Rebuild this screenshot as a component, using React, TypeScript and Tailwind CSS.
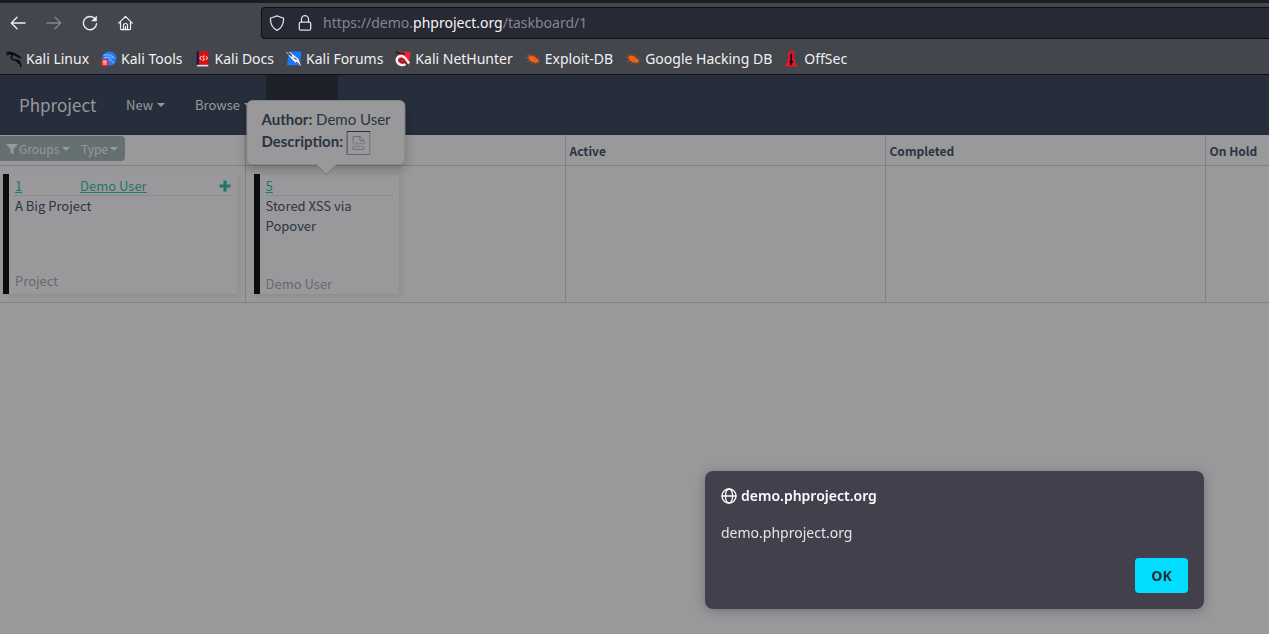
import React from "react";

type IconProps = { className?: string };

const stroke = {
  fill: "none",
  stroke: "currentColor",
  strokeWidth: 1.3,
  strokeLinecap: "round" as const,
  strokeLinejoin: "round" as const,
};

const BackIcon = ({ className = "" }: IconProps) => (
  <svg viewBox="0 0 16 16" className={`size-4 ${className}`} {...stroke} aria-hidden="true">
    <path d="M15 8H1.5M7 2.2 1.3 8 7 13.8" />
  </svg>
);

const ForwardIcon = () => (
  <svg viewBox="0 0 16 16" className="size-4" {...stroke} aria-hidden="true">
    <path d="M1 8h13.5M9 2.2 14.7 8 9 13.8" />
  </svg>
);

const ReloadIcon = () => (
  <svg viewBox="0 0 16 16" className="size-4" {...stroke} aria-hidden="true">
    <path d="M13.2 4A6.6 6.6 0 1 0 14.6 8.6" />
    <path d="M14.6 1.3v4.8H9.8z" fill="currentColor" strokeWidth="0.5" />
  </svg>
);

const HomeIcon = () => (
  <svg viewBox="0 0 16 16" className="size-4" {...stroke} strokeWidth={1.2} aria-hidden="true">
    <path d="M.8 8.2 7.500 1.400l6.700 6.800M2.500 7v6.800c0 .5.3.8.8.8h8.400c.5 0 .8-.3.8-.8V7" />
    <path d="M5.500 14.400V10.500c0-1.300.8-2 2-2s2 .7 2 2v3.900M7.500 11.500v2.900" />
  </svg>
);

const ShieldIcon = () => (
  <svg viewBox="0 0 16 16" className="size-4" {...stroke} aria-hidden="true">
    <path d="M8 .8 13.9 3c.4.1.7.5.7.9C14.5 9 12.5 13 8 15.3 3.5 13 1.5 9 1.4 3.9c0-.4.3-.8.7-.9z" />
  </svg>
);

const LockIcon = () => (
  <svg viewBox="0 0 16 16" className="size-4" {...stroke} aria-hidden="true">
    <rect x="2.3" y="7.2" width="11.4" height="8" rx="1.5" />
    <path d="M4.5 7V4.200a3.500 3.500 0 0 1 7 0V7" />
  </svg>
);

const GlobeIcon = () => (
  <svg viewBox="0 0 16 16" className="size-4" {...stroke} aria-hidden="true">
    <circle cx="8" cy="8" r="7" />
    <ellipse cx="8" cy="8" rx="3.6" ry="7" />
    <path d="M1 8h14" />
  </svg>
);

const DragonIcon = () => (
  <svg viewBox="0 0 16 16" className="size-4" fill="none" stroke="#0b0b0d" strokeLinecap="round" aria-hidden="true">
    <path d="M.5 1.200C4 .8 8 1.500 11.200 4M.4 3.800C3.500 2.600 6.500 2.700 9.500 4" strokeWidth="1" />
    <path d="M2 2.500c3-.6 6.500 0 9 2.500M6.300 4.300C4.300 7 6 9 9 9c4 .1 5.700 2.200 5.800 6.200" strokeWidth="1.6" />
    <path d="M10.500 4.200c2 .1 3.500 1 4.300 2.600l-3.300-.8M9.500 9.500c2.200.6 3 1.800 3 3" strokeWidth="1.1" />
  </svg>
);

const ToolsIcon = () => (
  <svg viewBox="0 0 16 16" className="size-4" aria-hidden="true">
    <circle cx="8.300" cy="7.600" r="7.200" fill="#2878f5" />
    <path d="M2.500 4.500C6 3 9.500 3.600 11.800 6.200M3 7c3-1.300 5.500-1 7.500.2M8 7.500c-.5 2.400 4 1.300 4.700 4.800M11 5.500l2.700 1.700" fill="none" stroke="#a9cbff" strokeWidth="0.9" />
    <circle cx="3.800" cy="11.800" r="3.800" fill="#ed2630" />
    <path d="M1.900 10.200h3.900M3 10.200v3.700M4.800 10.200v3.700" stroke="#fff" strokeWidth="0.9" />
  </svg>
);

const DocsIcon = () => (
  <svg viewBox="0 0 16 16" className="size-4" aria-hidden="true">
    <path d="M1.500.3h2.700v13.500H1.500z" fill="#181c49" />
    <path d="M4 .3h9.300v13.500H4z" fill="#dc1013" />
    <path d="M2 13.800h11.300v1.700H2z" fill="#ddd5d8" />
    <path d="M6.400 5 4.700 7l1.700 2M10.900 5l1.700 2-1.700 2M9.500 5H8.300l-.5 1.500 1.500 1-.4 1.700H7.600" fill="none" stroke="#fff" strokeWidth="0.9" />
  </svg>
);

const ForumsIcon = () => (
  <svg viewBox="0 0 16 16" className="size-4" aria-hidden="true">
    <path d="M3.200.5h12.300L14 14.300H.8z" fill="#1876f8" />
    <path d="m0 .8 4.500.8 7.700 6.100L15.200 15 8.600 11 5.700 7.900z" fill="#f5f5f5" />
    <path d="M1 .8 6 4.200M2 2.600l4.300 3M7.700 6.700l3 1.800M10 11l3.500 2.500" fill="none" stroke="#17191e" strokeWidth="0.9" />
  </svg>
);

const NetHunterIcon = () => (
  <svg viewBox="0 0 16 16" className="size-4" aria-hidden="true">
    <path d="M4.500.8h11.100L14.300 13.800H3z" fill="#ef2334" />
    <path d="M.5.9 5 2.300l5 .4" fill="none" stroke="#111" strokeWidth="1.6" strokeDasharray="1.5 .5" />
    <path d="M10.500 13.200C7.500 14.800 3.500 13.800 2.200 10.900 1 8 2.600 5.200 5.700 5c2-.1 3.600.8 4.700 2.300l3.700 5.200" fill="none" stroke="#f4f4f4" strokeWidth="2.4" />
    <path d="M9.300 11.500C7 12.600 4.800 11.500 4.800 9.500c.3-2 2.600-2.300 4-.6l3.600 5" fill="none" stroke="#15151a" strokeWidth="0.8" />
  </svg>
);

const BugIcon = () => (
  <svg viewBox="0 0 16 16" className="size-4" aria-hidden="true">
    <path d="m2 3.700 5 2.200M5.500 2.800l2.600 3M1 6.300l5 .8M2 10.400l4.500-1M6.500 12.500l2.500-2M10.200 13.300l.3-2.500M9.700 3.700l.7 2.500M13.900 6.300l-2.400 1.300M14 12.100l-2-1.300M12.500 9l2.500.7" stroke="#ad5527" strokeWidth="0.9" />
    <path d="M3.400 5.700C5.600 4 8.700 4.800 11 7c2.200 1.200 2.900 2.700 2.300 3.900-1.200 1.200-3.400 1.200-5.400.2-2.900-.9-4.700-2.900-4.500-5.400z" fill="#f5600f" />
  </svg>
);

const OffSecIcon = () => (
  <svg viewBox="0 0 16 16" className="size-4" aria-hidden="true">
    <path d="M4 .3h6.300v8.200l3.300 7.200H.8L4 8.500z" fill="#e41824" />
    <path d="M7.100 2 8.300 4l-.4 4.500 1.300 2.500-1.300 1.600.4 1.700H6l.4-1.700L5.100 11l1.300-2.500L6 4z" fill="#260b10" />
  </svg>
);

const FilterIcon = () => (
  <svg viewBox="0 0 12 12" className="size-3" fill="currentColor" aria-hidden="true">
    <path d="M.8 1h10.400c.5 0 .6.500.3.800L7.600 6v5.500L4.400 9.400V6L.5 1.800C.2 1.500.3 1 .8 1z" />
  </svg>
);

const PlusIcon = () => (
  <svg viewBox="0 0 12 12" className="size-3" fill="currentColor" aria-hidden="true">
    <path d="M4.500.5h3v4h4v3h-4v4h-3v-4h-4v-3h4z" />
  </svg>
);

const Caret = () => (
  <span className="inline-block border-x-4 border-t-4 border-x-transparent border-t-current" aria-hidden="true" />
);

const BrokenImage = () => (
  <svg viewBox="0 0 24 24" className="inline-block size-6 align-middle" fill="none" role="img" aria-label="Missing image">
    <path d="M.5 24V.5H24" stroke="#2e2f32" />
    <path d="M23.500 1v22.500H1" stroke="#66676a" />
    <path d="M6.500 11.500v-6h7l4 4v3M13.500 5.500v4h4" stroke="#6f7073" />
    <path d="m6.500 11.500 2 2 2-2 2 2 2-2 2 2 1-1M6.500 18.500v-3l2 1 2-2 2 2 2-2 2 2 1-.5v2.500z" stroke="#6f7073" strokeWidth="0.9" />
  </svg>
);

const bookmarks = [
  { label: "Kali Linux", Icon: DragonIcon },
  { label: "Kali Tools", Icon: ToolsIcon },
  { label: "Kali Docs", Icon: DocsIcon },
  { label: "Kali Forums", Icon: ForumsIcon },
  { label: "Kali NetHunter", Icon: NetHunterIcon },
  { label: "Exploit-DB", Icon: BugIcon },
  { label: "Google Hacking DB", Icon: BugIcon },
  { label: "OffSec", Icon: OffSecIcon },
];

function BrowserChrome() {
  return (
    <header className="border-b border-[#101116] bg-[#43464c] font-['Noto_Sans',sans-serif] text-[14px] text-[#f1f1f3]">
      <div className="flex h-[3px] bg-[#1b1c20]" />
      <div className="flex h-10 items-center pl-[10px]">
        <nav className="flex w-[251px] shrink-0 items-center gap-5" aria-label="Navigation">
          <button aria-label="Back"><BackIcon /></button>
          <button aria-label="Forward" className="text-[#85868b]" disabled><ForwardIcon /></button>
          <button aria-label="Reload"><ReloadIcon /></button>
          <button aria-label="Home"><HomeIcon /></button>
        </nav>
        <div className="flex h-8 grow items-center gap-3 rounded-l border border-r-0 border-[#0e0f13] bg-[#272935] pl-[7px] text-[#dedee2]">
          <ShieldIcon />
          <LockIcon />
          <a href="#board" className="-ml-0.5 leading-5 text-[#85868d]">
            https://demo.<span className="text-[#f5f5f7]">phproject.org</span>/taskboard/1
          </a>
        </div>
      </div>
      <nav className="flex h-[31px] items-center gap-3 pl-[6px]" aria-label="Bookmarks">
        {bookmarks.map(({ label, Icon }) => (
          <a key={label} href="#board" className="flex items-center gap-1 whitespace-nowrap">
            <Icon />
            {label}
          </a>
        ))}
      </nav>
    </header>
  );
}

function Navbar() {
  return (
    <nav className="flex h-[60px] items-center bg-[#272e3b] pl-[19px] text-[13px] text-[#98999c]">
      <a href="#board" className="w-[107px] text-[17px]">Phproject</a>
      <button className="flex w-[69px] items-center gap-1">New <Caret /></button>
      <button className="flex w-[71px] items-center gap-1">Browse <Caret /></button>
      <div className="h-full w-[72px] bg-[#1d2129]" />
    </nav>
  );
}

function Popover() {
  return (
    <div
      role="tooltip"
      className="absolute bottom-full left-1/2 mb-[9px] h-[65px] -translate-x-1/2 whitespace-nowrap rounded-md border border-[#868789] bg-[#99999b] px-[14px] py-[7px] font-[Lato,sans-serif] text-[15px] leading-[22px] text-[#2b3442] shadow-[0_5px_10px_rgba(0,0,0,0.22)]"
    >
      <p><strong>Author:</strong> Demo User</p>
      <p><strong>Description:</strong> <BrokenImage /></p>
      <svg viewBox="0 0 22 11" className="absolute left-1/2 top-full h-[11px] w-[22px] -translate-x-1/2" aria-hidden="true">
        <path d="M0 0h22L11 10.500z" fill="#99999b" />
        <path d="M.5 0 11 10.500 21.500 0" fill="none" stroke="#78797b" />
      </svg>
    </div>
  );
}

const cardClass =
  "flex h-[120px] flex-col border-l-6 border-[#0b0c0e] px-[6px] shadow-[2px_2px_6px_rgba(0,0,0,0.09)]";

const cardHeaderClass =
  "flex h-[22px] items-center border-b border-dotted border-[#7c7d7f] pt-[3px] text-[#1f7767]";

function Board() {
  return (
    <table id="board" className="w-full table-fixed border-collapse text-left text-[13px] leading-5 text-[#2b3442]">
      <colgroup>
        <col className="w-[245px]" />
        <col className="w-80" />
        <col className="w-80" />
        <col className="w-80" />
        <col />
      </colgroup>
      <thead>
        <tr className="h-[30px] border-b border-[#7f8082] text-[12px]">
          <th className="border-r border-[#7f8082] align-top">
            <div className="mt-px flex h-[25px] w-[125px] items-center justify-between rounded-r bg-[#657071] pl-[6px] pr-[7px] font-normal text-[#98999c]">
              <button className="flex items-center gap-px"><FilterIcon />Groups<span className="ml-0.5 flex"><Caret /></span></button>
              <button className="flex items-center gap-0.5">Type<Caret /></button>
            </div>
          </th>
          <th className="border-r border-[#7f8082]" aria-label="New" />
          <th className="border-r border-[#7f8082] px-1 pt-[3px]">Active</th>
          <th className="border-r border-[#7f8082] px-1 pt-[3px]">Completed</th>
          <th className="whitespace-nowrap px-1 pt-[3px]">On Hold</th>
        </tr>
      </thead>
      <tbody>
        <tr className="h-[137px] border-b border-[#7f8082] align-top">
          <td className="border-r border-[#7f8082] pl-[3px] pr-2 pt-2">
            <article className={cardClass}>
              <div className={cardHeaderClass}>
                <a href="#board" className="w-[65px] underline">1</a>
                <a href="#board" className="grow underline">Demo User</a>
                <button aria-label="Add task"><PlusIcon /></button>
              </div>
              <p>A Big Project</p>
              <p className="mb-[3px] mt-auto text-[#68696d]">Project</p>
            </article>
          </td>
          <td className="border-r border-[#7f8082] pl-2 pt-2">
            <div className="relative w-[145px]">
              <article className={cardClass}>
                <div className={cardHeaderClass}>
                  <a href="#board" className="underline">5</a>
                </div>
                <p>Stored XSS via Popover</p>
                <p className="mt-auto text-[#68696d]">Demo User</p>
              </article>
              <Popover />
            </div>
          </td>
          <td className="border-r border-[#7f8082]" />
          <td className="border-r border-[#7f8082]" />
          <td />
        </tr>
      </tbody>
    </table>
  );
}

function AlertDialog() {
  return (
    <div
      role="alertdialog"
      aria-labelledby="alert-title"
      aria-describedby="alert-text"
      className="fixed bottom-[25px] right-[65px] flex w-[499px] flex-col rounded-lg bg-[#43404d] px-4 pb-4 pt-[15px] font-['Noto_Sans',sans-serif] text-[14px] leading-5 text-[#e4e4e8] shadow-[0_2px_12px_rgba(0,0,0,0.25)]"
    >
      <h2 id="alert-title" className="flex items-center gap-1 font-semibold text-[#fbfbfe]">
        <GlobeIcon />
        demo.phproject.org
      </h2>
      <p id="alert-text" className="mt-[17px]">demo.phproject.org</p>
      <button className="mt-[15px] h-[35px] w-[53px] self-end rounded bg-[#00ddff] font-bold text-[#2b2a33]">OK</button>
    </div>
  );
}

export default function App() {
  return (
    <div className="min-h-screen bg-[#99999b]">
      <BrowserChrome />
      <main className="font-['Noto_Sans_CJK_SC',sans-serif]">
        <Navbar />
        <Board />
      </main>
      <AlertDialog />
    </div>
  );
}
